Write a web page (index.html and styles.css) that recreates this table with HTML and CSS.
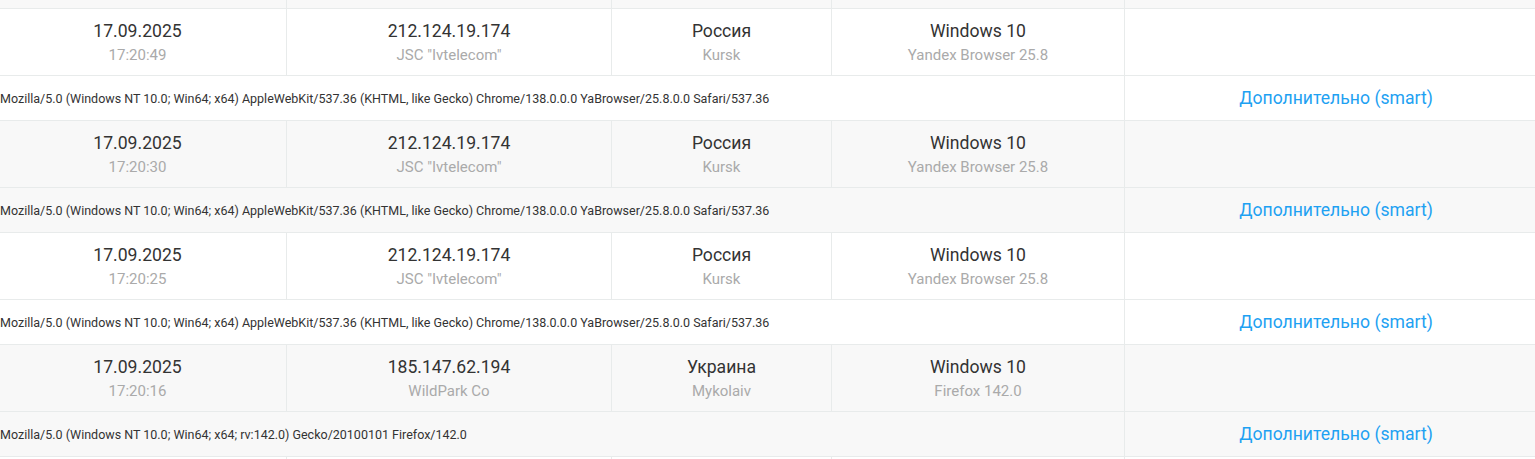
FILE: index.html
```html
<!DOCTYPE html>
<html lang="ru">
<head>
<meta charset="utf-8">
<title>Журнал входов</title>
<link rel="stylesheet" href="styles.css">
</head>
<body>
<div class="viewport">
<table class="log">
  <colgroup>
    <col class="c-date"><col class="c-ip"><col class="c-geo"><col class="c-os"><col class="c-more">
  </colgroup>
  <thead>
    <tr class="head"><th></th><th></th><th></th><th></th><th></th></tr>
  </thead>
  <tbody class="rec">
    <tr class="main">
      <td><div class="pri">17.09.2025</div><div class="sec">17:20:49</div></td>
      <td><div class="pri">212.124.19.174</div><div class="sec">JSC "Ivtelecom"</div></td>
      <td><div class="pri">Россия</div><div class="sec">Kursk</div></td>
      <td><div class="pri">Windows 10</div><div class="sec">Yandex Browser 25.8</div></td>
      <td></td>
    </tr>
    <tr class="ua">
      <td colspan="4">Mozilla/5.0 (Windows NT 10.0; Win64; x64) AppleWebKit/537.36 (KHTML, like Gecko) Chrome/138.0.0.0 YaBrowser/25.8.0.0 Safari/537.36</td>
      <td class="more"><a href="#">Дополнительно (smart)</a></td>
    </tr>
  </tbody>
  <tbody class="rec alt">
    <tr class="main">
      <td><div class="pri">17.09.2025</div><div class="sec">17:20:30</div></td>
      <td><div class="pri">212.124.19.174</div><div class="sec">JSC "Ivtelecom"</div></td>
      <td><div class="pri">Россия</div><div class="sec">Kursk</div></td>
      <td><div class="pri">Windows 10</div><div class="sec">Yandex Browser 25.8</div></td>
      <td></td>
    </tr>
    <tr class="ua">
      <td colspan="4">Mozilla/5.0 (Windows NT 10.0; Win64; x64) AppleWebKit/537.36 (KHTML, like Gecko) Chrome/138.0.0.0 YaBrowser/25.8.0.0 Safari/537.36</td>
      <td class="more"><a href="#">Дополнительно (smart)</a></td>
    </tr>
  </tbody>
  <tbody class="rec">
    <tr class="main">
      <td><div class="pri">17.09.2025</div><div class="sec">17:20:25</div></td>
      <td><div class="pri">212.124.19.174</div><div class="sec">JSC "Ivtelecom"</div></td>
      <td><div class="pri">Россия</div><div class="sec">Kursk</div></td>
      <td><div class="pri">Windows 10</div><div class="sec">Yandex Browser 25.8</div></td>
      <td></td>
    </tr>
    <tr class="ua">
      <td colspan="4">Mozilla/5.0 (Windows NT 10.0; Win64; x64) AppleWebKit/537.36 (KHTML, like Gecko) Chrome/138.0.0.0 YaBrowser/25.8.0.0 Safari/537.36</td>
      <td class="more"><a href="#">Дополнительно (smart)</a></td>
    </tr>
  </tbody>
  <tbody class="rec alt">
    <tr class="main">
      <td><div class="pri">17.09.2025</div><div class="sec">17:20:16</div></td>
      <td><div class="pri">185.147.62.194</div><div class="sec">WildPark Co</div></td>
      <td><div class="pri">Украина</div><div class="sec">Mykolaiv</div></td>
      <td><div class="pri">Windows 10</div><div class="sec">Firefox 142.0</div></td>
      <td></td>
    </tr>
    <tr class="ua">
      <td colspan="4">Mozilla/5.0 (Windows NT 10.0; Win64; x64; rv:142.0) Gecko/20100101 Firefox/142.0</td>
      <td class="more"><a href="#">Дополнительно (smart)</a></td>
    </tr>
  </tbody>
  <tbody class="rec">
    <tr class="main tail">
      <td></td><td></td><td></td><td></td><td></td>
    </tr>
  </tbody>
</table>
</div>
</body>
</html>
```

FILE: styles.css
```css
html, body {
  margin: 0;
  padding: 0;
  background: #ffffff;
}
body {
  font-family: Roboto, "Noto Sans", Arial, sans-serif;
  color: #333333;
  overflow: hidden;
}
.viewport {
  width: 1535px;
  height: 459px;
  overflow: hidden;
}
.log {
  border-collapse: collapse;
  table-layout: fixed;
  width: 1559px;
  margin-left: -12px;
}
.c-date { width: 298px; }
.c-ip { width: 325px; }
.c-geo { width: 220px; }
.c-os { width: 293px; }
.c-more { width: 423px; }

.log th,
.log td {
  border: 1px solid #e8ebeb;
  padding: 0;
}
.head th {
  height: 8px;
  background: #f8f8f8;
  border-top: 0;
}
.rec.alt td {
  background: #f8f8f8;
}
.main td {
  text-align: center;
  padding: 9px 12px;
  height: 48px;
  vertical-align: top;
}
.pri {
  font-size: 17.6px;
  line-height: 26px;
  color: #333333;
}
.sec {
  font-size: 15px;
  line-height: 22px;
  color: #aaaaaa;
}
.ua td {
  height: 44px;
  padding: 0 12px 0 11px;
  font-size: 12.5px;
  color: #333333;
  vertical-align: middle;
  white-space: nowrap;
}
.ua td.more {
  text-align: center;
  padding: 0 12px;
}
.more a {
  font-size: 17.6px;
  color: #1ea1f2;
  text-decoration: none;
}
```
